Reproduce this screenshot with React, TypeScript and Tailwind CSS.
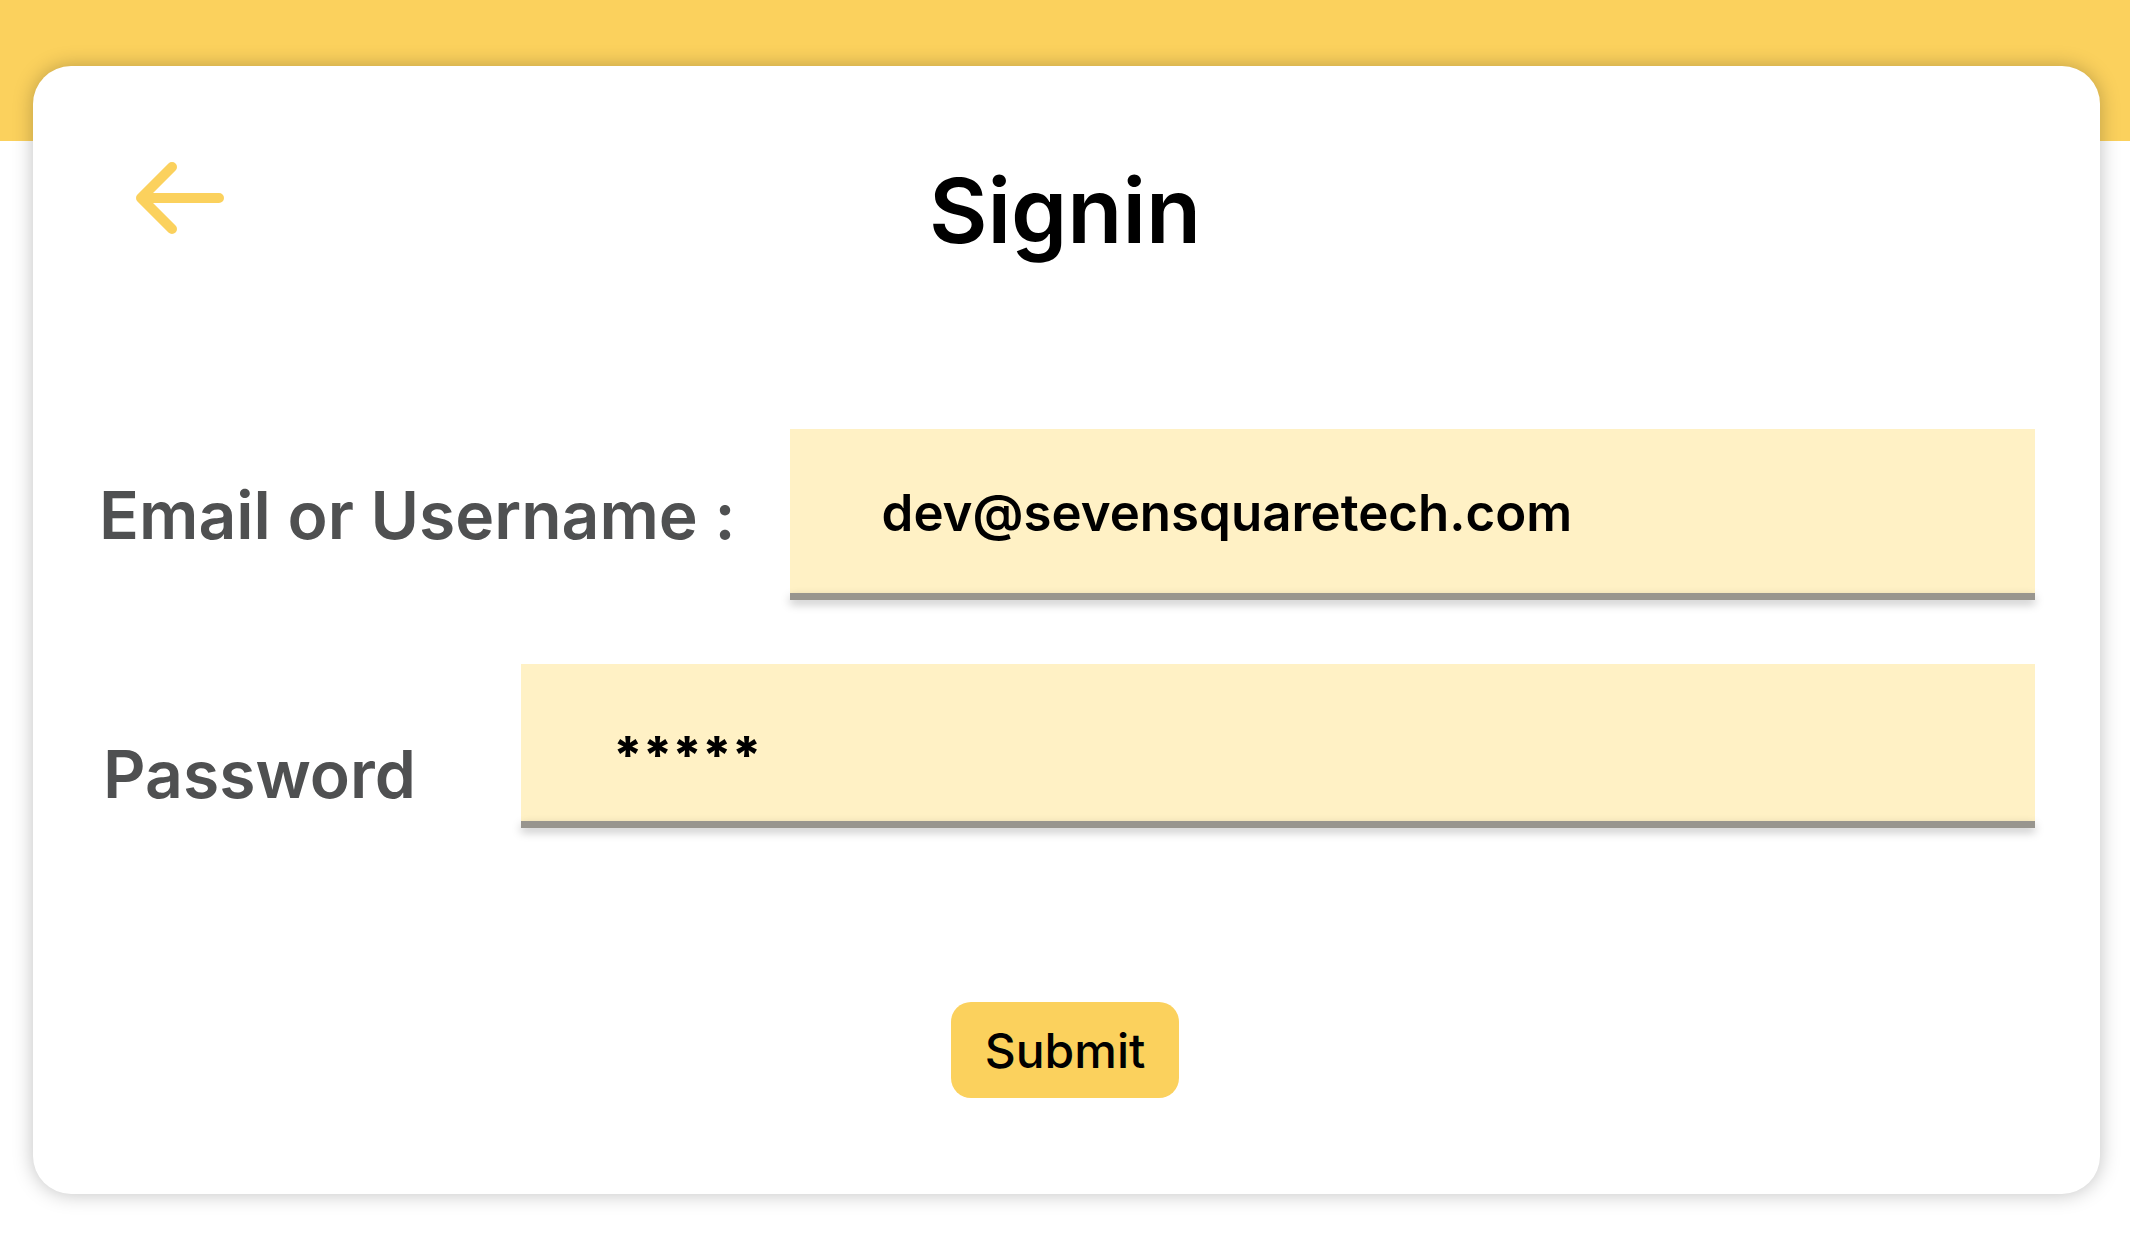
import { useState } from "react";

type FieldProps = {
  id: string;
  label: string;
  value: string;
  onChange: (value: string) => void;
  rowClass: string;
  labelClass: string;
  inputClass: string;
};

function Field({ id, label, value, onChange, rowClass, labelClass, inputClass }: FieldProps) {
  return (
    <div className={`flex ${rowClass}`}>
      <label
        htmlFor={id}
        className={`shrink-0 whitespace-nowrap text-[66px] leading-[80px] font-semibold text-[#4f5051] ${labelClass}`}
      >
        {label}
      </label>
      <div className="flex min-w-0 flex-1 flex-col">
        <input
          id={id}
          type="text"
          autoComplete="off"
          spellCheck={false}
          value={value}
          onChange={(e) => onChange(e.target.value)}
          className={`w-full rounded-none bg-[#fff1c5] text-[51px] text-black outline-none ${inputClass}`}
        />
        <div className="h-[7px] bg-[#98958e] shadow-[0_4px_10px_rgba(0,0,0,0.25)]" />
      </div>
    </div>
  );
}

export default function App() {
  const [email, setEmail] = useState("dev@sevensquaretech.com");
  const [password, setPassword] = useState("*****");

  return (
    <div className="min-h-screen bg-[linear-gradient(#fbd15d_141px,#ffffff_141px)] pt-[66px] pr-[30px] pb-12 pl-[33px] font-['Inter',sans-serif]">
      <main className="rounded-[38px] bg-white pt-[89px] pr-[65px] pb-24 pl-[62px] shadow-[0_0_20px_rgba(0,0,0,0.25)]">
        <header className="grid grid-cols-[1fr_auto_1fr] items-start">
          <button type="button" aria-label="Back" className="ml-[41px] w-[88px] cursor-pointer pt-px">
            <svg viewBox="0 0 88 84" className="w-full" fill="none" stroke="#fbd15d" strokeWidth="10" strokeLinecap="round" strokeLinejoin="round">
              <path d="M36 11 5 42l31 31M8 42h75" />
            </svg>
          </button>
          <h1 className="text-[90px] leading-[112px] font-semibold text-black">Signin</h1>
        </header>

        <form className="mt-[162px] flex flex-col" onSubmit={(e) => e.preventDefault()}>
          <Field
            id="email"
            label="Email or Username :"
            value={email}
            onChange={setEmail}
            rowClass="items-center gap-[54px]"
            labelClass="pl-1"
            inputClass="h-[164px] px-[92px] pt-0.5 font-semibold"
          />
          <Field
            id="password"
            label="Password"
            value={password}
            onChange={setPassword}
            rowClass="mt-16 items-end gap-[105px]"
            labelClass="pb-3.5 pl-2"
            inputClass="h-[157px] px-[92px] pt-6 font-extrabold"
          />
          <button
            type="submit"
            className="mt-[174px] h-24 cursor-pointer self-center rounded-[20px] bg-[#fbd15d] px-[34px] pt-0.5 text-[48px] font-medium text-black"
          >
            Submit
          </button>
        </form>
      </main>
    </div>
  );
}
